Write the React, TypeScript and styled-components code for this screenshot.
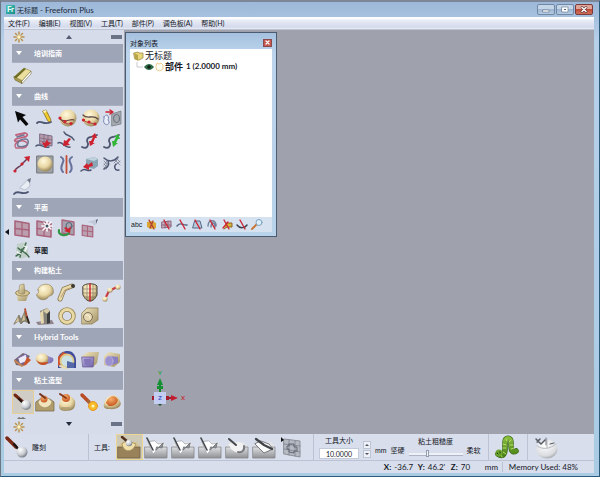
import React, { useState } from "react";
import styled, { createGlobalStyle } from "styled-components";

const GlobalStyle = createGlobalStyle`
  *, *::before, *::after { box-sizing: border-box; }
  body {
    margin: 0;
    font-family: Lato, "Noto Sans CJK SC", sans-serif;
    font-size: 7px;
    line-height: 10px;
    color: #15181f;
  }
  button { font: inherit; color: inherit; padding: 0; border: 0; background: none; }
  svg { display: block; flex: none; }
`;

const Window = styled.div`
  min-height: 100vh;
  display: flex;
  flex-direction: column;
  padding: 0 5px 3px 3px;
  background: linear-gradient(#9db8d8, #b6d0ea 40px, #a9cbe4);
  border: 1px solid #2d5a78;
  border-top: 2px solid #7d8797;
  border-left-color: #6b7780;
`;

const TitleBar = styled.header`
  height: 15px;
  display: flex;
  align-items: center;
  gap: 2px;
  padding: 0 1px 0 2px;
`;

const Logo = styled.span`
  width: 9px;
  height: 9px;
  background: linear-gradient(135deg, #4cc4b6, #158f88);
  color: #f0fffc;
  font-size: 8px;
  font-weight: 700;
  line-height: 9px;
  text-align: center;
`;

const Title = styled.h1`
  flex: 1;
  margin: 0;
  font-size: 7px;
  font-weight: 400;
  color: #1d2a3b;
`;

const Latin = styled.span`
  font-size: 8px;
`;

const Caption = styled.div`
  display: flex;
  gap: 1px;
`;

const CaptionButton = styled.button<{ $danger?: boolean }>`
  width: 18px;
  height: 11px;
  display: grid;
  place-items: center;
  border: 1px solid ${(p) => (p.$danger ? "#7c3a3a" : "#7289a6")};
  border-radius: 2px;
  background: ${(p) =>
    p.$danger
      ? "linear-gradient(#dfa596 45%, #c04a38 50%, #d0705a)"
      : "linear-gradient(#c5d6e9 45%, #9db5d0 50%, #b4cbe3)"};
`;

const MenuBar = styled.nav`
  height: 13px;
  display: flex;
  align-items: center;
  gap: 9px;
  padding: 0 4px;
  background: linear-gradient(#fdfdff 0 2px, #e9edf7 3px, #d3daeb 10px, #e9ecf5);
  border-bottom: 1px solid #bcc4d4;
`;

const MenuItem = styled.button`
  line-height: 10px;
  white-space: nowrap;
`;

const Workspace = styled.div`
  flex: 1;
  display: flex;
`;

const Sidebar = styled.aside`
  width: 120px;
  flex: none;
  display: flex;
  flex-direction: column;
  padding: 0 1px 0 8px;
  background: #d6dcea;
  position: relative;
`;

const Collapse = styled.button`
  position: absolute;
  left: 1px;
  top: 50%;
  display: grid;
  transform: translateY(-50%);
`;

const Strip = styled.div`
  height: 14px;
  display: flex;
  align-items: center;
  justify-content: space-between;
  padding-right: 1px;
`;

const BottomStrip = styled(Strip)`
  height: 20px;
`;

const Grip = styled.span`
  width: 11px;
  height: 4px;
  background: #6b7387;
`;

const SectionHead = styled.button`
  width: 100%;
  height: 19px;
  display: flex;
  align-items: center;
  gap: 12px;
  padding-left: 4px;
  background: #9ea5b7;
  border-bottom: 1px solid #aab0c1;
  color: #fff;
  font-weight: 700;
  text-align: left;
`;

const ToolGrid = styled.div<{ $row: number }>`
  display: grid;
  grid-template-columns: repeat(5, 1fr);
  grid-auto-rows: ${(p) => p.$row}px;
`;

const Tool = styled.button<{ $active?: boolean }>`
  display: flex;
  align-items: center;
  background: ${(p) => (p.$active ? "#cfcdc6" : "none")};
  box-shadow: ${(p) => (p.$active ? "inset 0 0 0 1px #e6cf94" : "none")};
`;

const SketchTool = styled(Tool)`
  grid-column: 1 / span 3;
  font-weight: 700;
`;

const Viewport = styled.main`
  flex: 1;
  display: flex;
  align-items: flex-end;
  padding: 0 0 23px 22px;
  background: #9fa2ad;
  position: relative;
`;

const AxisLabel = styled.text`
  font: 700 6px Lato, sans-serif;
  text-anchor: middle;
`;

const Panel = styled.section`
  position: absolute;
  left: 1px;
  top: 2px;
  width: 152px;
  height: 205px;
  display: flex;
  flex-direction: column;
  padding: 3px 4px 4px;
  background: linear-gradient(#a5c1df, #bcd4ec 20px, #b9d3ea);
  border: 1px solid #4c5c70;
`;

const PanelHead = styled.header`
  height: 13px;
  display: flex;
  align-items: center;
  justify-content: space-between;
`;

const PanelClose = styled.button`
  width: 9px;
  height: 8px;
  display: grid;
  place-items: center;
  background: #c5574c;
  border: 1px solid #8c4a4c;
`;

const PanelBody = styled.div`
  flex: 1;
  background: #fff;
  padding: 1px 2px;
`;

const TreeRow = styled.div<{ $child?: boolean }>`
  height: 11px;
  display: flex;
  align-items: center;
  gap: 1px;
  font-size: 9px;
  line-height: 11px;
  font-weight: ${(p) => (p.$child ? 700 : 400)};
  padding-left: ${(p) => (p.$child ? 4 : 1)}px;
  white-space: nowrap;
`;

const PanelTools = styled.div`
  height: 15px;
  display: flex;
  align-items: center;
  justify-content: space-between;
  padding: 0 9px 0 1px;
  background: #d6e2f0;
`;

const TextTool = styled.button`
  font: 7px/10px "Liberation Sans", sans-serif;
`;

const Dock = styled.footer`
  background: #d8deec;
`;

const ToolBar = styled.div`
  height: 27px;
  display: flex;
  align-items: stretch;
  border-bottom: 1px solid #bac2d3;
`;

const Group = styled.div<{ $width?: number }>`
  display: flex;
  align-items: center;
  gap: 4px;
  padding: 0 5px;
  ${(p) => p.$width && `width: ${p.$width}px;`}
  border-right: 1px solid #bac2d3;
  white-space: nowrap;
  &:last-child { border-right: 0; }
`;

const CurrentTool = styled(Group)`
  padding: 0 1px;
`;

const ShapeButton = styled.button<{ $active?: boolean }>`
  width: 27px;
  height: 26px;
  display: grid;
  place-items: center;
  background: ${(p) => (p.$active ? "#cfc9b8" : "none")};
  border: ${(p) => (p.$active ? "1px solid #ebd692" : "0")};
`;

const Shapes = styled.div`
  display: flex;
  margin-left: 2px;
`;

const Field = styled.label`
  display: flex;
  flex-direction: column;
  align-items: center;
  gap: 3px;
`;

const SizeInput = styled.input`
  width: 40px;
  height: 11px;
  padding: 0 1px;
  border: 1px solid #c3cad9;
  background: #fff;
  font: 7px/9px Lato, sans-serif;
  text-align: center;
  color: #15181f;
`;

const Spinner = styled.div`
  display: flex;
  flex-direction: column;
  align-self: flex-end;
  gap: 1px;
  margin-bottom: 2px;
`;

const SpinButton = styled.button`
  width: 8px;
  height: 8px;
  display: grid;
  place-items: center;
  background: #eef1f7;
  border: 1px solid #bdc4d2;
`;

const Low = styled.span`
  align-self: flex-end;
  margin-bottom: 5px;
`;

const Slider = styled.input`
  appearance: none;
  width: 54px;
  height: 10px;
  margin: 0;
  background: linear-gradient(transparent 4px, #eef1f7 4px 6px, #aeb5c5 6px 7px, transparent 7px);
  &::-webkit-slider-thumb {
    appearance: none;
    width: 3px;
    height: 7px;
    background: #f4f6fa;
    border: 1px solid #949db0;
  }
`;

const StatusBar = styled.div`
  height: 12px;
  display: flex;
  align-items: center;
  justify-content: flex-end;
  padding-right: 16px;
  font-size: 8px;
  white-space: nowrap;
`;

const Coord = styled.span<{ $width: number }>`
  width: ${(p) => p.$width}px;
  display: flex;
  gap: 3px;
`;

const Memory = styled.span`
  border-left: 1px solid #bac2d3;
  padding-left: 6px;
`;

const HiddenSvg = styled.svg`
  position: absolute;
  width: 0;
  height: 0;
`;

const red = "#cf2230";
const ink = "#4d5670";

const Gradients = () => (
  <HiddenSvg aria-hidden="true">
    <defs>
      <radialGradient id="cream" cx=".4" cy=".3" r=".75">
        <stop offset="0" stopColor="#fff9dd" />
        <stop offset=".55" stopColor="#e9d7a4" />
        <stop offset="1" stopColor="#8d7a50" />
      </radialGradient>
      <radialGradient id="silver" cx=".35" cy=".3" r=".75">
        <stop offset="0" stopColor="#fff" />
        <stop offset=".6" stopColor="#c9ccd1" />
        <stop offset="1" stopColor="#6f747d" />
      </radialGradient>
      <radialGradient id="pearl" cx=".4" cy=".3" r=".8">
        <stop offset="0" stopColor="#fff" />
        <stop offset=".7" stopColor="#dadcdf" />
        <stop offset="1" stopColor="#8d9198" />
      </radialGradient>
      <radialGradient id="orange" cx=".4" cy=".3" r=".75">
        <stop offset="0" stopColor="#f7b06c" />
        <stop offset="1" stopColor="#c3501c" />
      </radialGradient>
      <linearGradient id="violet" x2="1" y2="1">
        <stop offset="0" stopColor="#b7acdf" />
        <stop offset="1" stopColor="#6e62a8" />
      </linearGradient>
      <linearGradient id="clay" x2="1" y2="1">
        <stop offset="0" stopColor="#f4e8bf" />
        <stop offset="1" stopColor="#a08f64" />
      </linearGradient>
      <linearGradient id="stone" x2="0" y2="1">
        <stop offset="0" stopColor="#dfe0e2" />
        <stop offset="1" stopColor="#8f9194" />
      </linearGradient>
      <linearGradient id="leaf" x2="0" y2="1">
        <stop offset="0" stopColor="#86bb3c" />
        <stop offset="1" stopColor="#4b8419" />
      </linearGradient>
    </defs>
  </HiddenSvg>
);

const Icon = ({ children, w = 22, h = 22 }: { children: React.ReactNode; w?: number; h?: number }) => (
  <svg width={w} height={h} viewBox={`0 0 ${w} ${h}`} fill="none" strokeLinecap="round" strokeLinejoin="round" aria-hidden="true">
    {children}
  </svg>
);

const Curve = ({ d, c = ink, w = 1.5 }: { d: string; c?: string; w?: number }) => (
  <path d={d} stroke={c} strokeWidth={w} />
);

const Dots = ({ at, r = 1.6 }: { at: number[][]; r?: number }) => (
  <>
    {at.map(([x, y]) => (
      <circle key={`${x}-${y}`} cx={x} cy={y} r={r} fill={red} />
    ))}
  </>
);

const PinkPlane = ({ s = 1 }: { s?: number }) => (
  <g transform={`scale(${s})`} stroke="#a9647c">
    <path d="M3 4L17 6.5V20L3 18Z" fill="#bb9fae" strokeWidth="1.6" />
    <path d="M10 5.5V19M3 11.5L17 13" strokeWidth="1.3" />
  </g>
);

const SunShape = () => (
  <g stroke="#b99148" strokeWidth="1.5">
    <path d="M7 1V2.5M7 9.5V11M2 6H3.5M10.5 6H12M3.5 2.5L4.5 3.5M9.5 8.5L10.5 9.5M3.5 9.5L4.5 8.5M9.5 3.5L10.5 2.5" />
    <circle cx="7" cy="6" r="2.3" fill="#fff3c8" strokeWidth=".8" />
  </g>
);

const icons: Record<string, React.ReactNode> = {
  book: (
    <>
      <path d="M2 13L12 4L19 7L10 17Z" fill="#eadf9c" stroke="#948a4a" strokeWidth=".6" />
      <path d="M2 13L12 4L14 5L4 14.5Z" fill="#6d6c22" />
      <path d="M2 13L3 16L10 19.5V17Z" fill="#a89b4e" stroke="#6c642b" strokeWidth=".6" />
      <path d="M10 17L19 7V10L10 19.5Z" fill="#fff" stroke="#7a713c" strokeWidth=".6" />
    </>
  ),
  arrow: <path d="M3 4L14 8L10.5 10L16.5 17L14 19L8 12.5L6 15.5Z" fill="#080808" />,
  pencil: (
    <>
      <Curve d="M3 16C7 12 9 19 17 15" w={1.8} />
      <path d="M9 4L12 3L17 13L16 15L14 14Z" fill="#f1c927" stroke="#85691a" strokeWidth=".8" />
      <path d="M9 4L10 6L12.5 5L12 3Z" fill="#fff3bf" />
    </>
  ),
  ballLeft: (
    <>
      <circle cx="12" cy="11" r="8.5" fill="url(#cream)" />
      <Curve d="M4 12C9 17 14 11 18 13" c="#6b4440" w={1.2} />
      <Curve d="M6 14C9 18 13 17 16 16" c="#a84a48" w={1} />
      <Dots at={[[4, 11], [9, 14.5], [15, 16.5]]} />
    </>
  ),
  ballRight: (
    <>
      <circle cx="12" cy="11" r="8.5" fill="url(#cream)" />
      <Curve d="M4 8C8 13 14 7 19 12" c="#5b4846" w={1.3} />
      <Curve d="M4 13C8 16 12 16 16 17" c="#a84a48" w={1} />
      <Dots at={[[4.5, 13], [10, 15], [16, 17]]} />
    </>
  ),
  project: (
    <>
      <path d="M11 7L20 4V17L11 19Z" fill="#a4a8af" stroke="#787d87" strokeWidth=".8" />
      <ellipse cx="15.5" cy="11.5" rx="3" ry="4" stroke="#666d7b" />
      <path d="M3 10C5 6 9 9 7 13C10 16 6 19 4 17C1 14 4 12 3 10Z" fill="#e7ecf8" stroke="#7c89b2" />
      <path d="M5 5H11M9 3L12 5L9 7" stroke={red} strokeWidth="1.5" />
    </>
  ),
  ribbon: (
    <>
      <path d="M4 5L13 3C17 4 15 7 12 7L4 9C1 11 4 12 6 11" stroke="#c2637e" strokeWidth="1.8" />
      <path d="M4 18C1 14 6 10 12 11C18 13 15 18 10 18Z" stroke="#c2637e" strokeWidth="1.4" />
      <path d="M5 7L12 5M6 16C4 13 8 9 12 9C18 8 17 15 13 16C10 17 8 17 6 16Z" stroke="#6f7590" strokeWidth="1.5" />
    </>
  ),
  gridArrow: (
    <>
      <path d="M6 4L18 6V16L6 14Z" fill="#b99cac" stroke="#7e6f88" />
      <path d="M10 4.5V15M14 5.5V16M6 8L18 10M6 11L18 13" stroke="#71667f" strokeWidth=".7" />
      <Curve d="M2 16C6 12 9 19 15 17" />
      <path d="M13 9L14 12L17 13L11 18L8 12L11 13Z" fill={red} />
    </>
  ),
  curveArrow: (
    <>
      <Curve d="M8 2C10 7 15 4 18 10" />
      <Curve d="M2 13C6 10 9 19 14 17" />
      <path d="M15 9L12 13L14 15L7 16L8 10L10 11L13 8Z" fill={red} />
    </>
  ),
  redSwap: (
    <>
      <Curve d="M3 17C9 20 10 14 8 11C8 6 12 8 18 5" w={1.8} />
      <path d="M16 3L18 8L16 8L14 13H16L11 16L10 11H12L14 7L12 7Z" fill={red} />
    </>
  ),
  greenSwap: (
    <>
      <Curve d="M3 17C9 20 10 14 8 11C8 6 12 8 18 5" w={1.8} />
      <path d="M17 4L19 9H17L15 13H17L12 17L11 11H13L15 7L13 7Z" fill="#32b637" />
    </>
  ),
  extend: (
    <>
      <Curve d="M3 18C4 13 8 15 10 11L15 6" c="#693c58" />
      <path d="M12 4L18 3L17 9Z" fill={red} />
      <Dots at={[[3, 18], [10, 11]]} />
    </>
  ),
  framedBall: (
    <>
      <rect x="3" y="3" width="16" height="17" fill="#9ea1a3" stroke="#77797b" />
      <circle cx="11" cy="11" r="7.5" fill="url(#cream)" />
    </>
  ),
  mirror: (
    <>
      <Curve d="M5 4C12 8 1 13 7 19" c="#66739a" w={2} />
      <Curve d="M16 4C9 8 20 13 14 19" c="#66739a" w={2} />
      <path d="M10.5 3V20" stroke="#c54e35" strokeWidth="1.8" />
    </>
  ),
  boxArrow: (
    <>
      <path d="M7 6L15 4L19 6V13L15 16L7 14Z" fill="#89a6b4" />
      <path d="M7 6L15 4L19 6L15 8Z" fill="#bed1dc" />
      <Curve d="M2 18C6 14 8 19 12 17" />
      <path d="M13 9L14 13L10 14L10 17L4 14L8 10L9 12Z" fill={red} />
    </>
  ),
  hatch: (
    <>
      <Curve d="M3 5C7 9 13 9 17 4M7 8C9 12 6 15 3 16M18 17C13 18 13 13 15 11" />
      <path d="M3 8L6 11M3 11L6 14M3 14L5 16M6 8L3 12M7 10L3 16M14 7L19 12M17 7L19 9M19 8L15 12M17 6L13 10" stroke="#6a7285" strokeWidth=".7" />
    </>
  ),
  coneCurve: (
    <>
      <Curve d="M2 18C6 13 10 20 16 16" w={1.8} />
      <path d="M17 3L18 10L13 14L8 12Z" fill="#e9edf4" stroke="#a9b1c1" strokeWidth=".7" />
      <path d="M15 4L19 2L18 7Z" fill="#6d7483" />
    </>
  ),
  plane: <PinkPlane />,
  planeStar: (
    <>
      <PinkPlane />
      <path d="M13 4V14M8 9H18M10 6L17 12M17 5L9 13" stroke="#fff" strokeWidth="1.6" />
      <circle cx="13" cy="9" r="1.5" fill="#465161" />
    </>
  ),
  planeArrow: (
    <>
      <path d="M6 3L18 5V18L6 16Z" fill="#a6a3ae" stroke="#a9647c" strokeWidth="1.3" />
      <ellipse cx="13" cy="9" rx="3" ry="3.5" stroke="#4e6a7d" />
      <path d="M3 13C2 18 9 20 13 16" stroke="#369447" strokeWidth="2.2" />
      <path d="M15 9L14 16L8 14L10 13L8 11L10 10L12 12Z" fill={red} />
    </>
  ),
  planeCone: (
    <>
      <g transform="translate(1 5)"><PinkPlane s={0.75} /></g>
      <path d="M8 5L19 2L16 9L13 6Z" fill="#c1c9d8" />
      <path d="M17 3L19 2L17 7Z" fill="#58657d" />
    </>
  ),
  sketch: (
    <>
      <path d="M5 5L14 3L17 17L8 20L4 14Z" fill="#c1d0c9" />
      <path d="M4 17C8 15 12 10 14 4M6 9C10 13 13 12 17 18M8 18L10 10" stroke="#416d4e" strokeWidth="1.4" />
      <path d="M12 7L15 8L13 12M5 13L9 15" stroke="#fff" strokeWidth="1.3" />
    </>
  ),
  pot: (
    <>
      <path d="M4 12L6 20H14L17 12Z" fill="url(#clay)" />
      <ellipse cx="10.5" cy="12" rx="7" ry="3" fill="#d8c795" stroke="#8b7b50" strokeWidth=".8" />
      <path d="M8 4L12 3L13 12C11 14 8 13 7 12Z" fill="url(#clay)" stroke="#85764e" strokeWidth=".5" />
    </>
  ),
  bean: <path d="M4 9C4 3 15 1 18 6C21 11 19 15 15 15C13 20 5 20 3 15C1 12 7 13 4 9Z" fill="url(#cream)" stroke="#8d7d53" strokeWidth=".6" />,
  tube: (
    <>
      <path d="M4 18L8 8L16 5" stroke="#8b7b52" strokeWidth="5" />
      <path d="M4 18L8 8L16 5" stroke="#e9daa9" strokeWidth="3.4" />
      <path d="M5 16L9 9L14 7" stroke="#b08a66" strokeWidth=".8" />
      <circle cx="17" cy="5" r="2" fill="#3d3a34" />
    </>
  ),
  face: (
    <>
      <path d="M4 5C6 2 16 2 18 5V14C16 18 14 20 11 20C8 20 6 18 4 14Z" fill="url(#cream)" stroke="#4c4538" strokeWidth="1" />
      <path d="M8 3V18M14 3V18M4 8H18M4 12H18M6 16H16" stroke="#7a705a" strokeWidth=".6" />
      <path d="M11 3V20" stroke={red} strokeWidth="1.5" />
    </>
  ),
  bones: (
    <>
      <path d="M4 18L8 10L16 6" stroke="#cc3c43" strokeWidth="2.2" />
      {[[4, 18], [9, 9], [17, 6]].map(([x, y]) => (
        <circle key={y} cx={x} cy={y} r="2.6" fill="url(#cream)" />
      ))}
    </>
  ),
  spikes: (
    <>
      <path d="M2 19L7 10L9 15L13 6L17 18L12 16L9 19L7 16Z" fill="#8c8571" stroke="#77725f" strokeWidth=".8" />
      <path d="M3 18L6 12L7 16M10 16L12 9L13 15" fill="#d7c699" />
      <path d="M13 4L15 12" stroke="#b54f32" strokeWidth="1.8" />
      <path d="M15 12L17 18" stroke="#33251e" strokeWidth="1.8" />
    </>
  ),
  tower: (
    <>
      <path d="M2 17L18 15L20 19L4 20Z" fill="#91858d" />
      <path d="M6 6L13 3L16 6V18L8 19Z" fill="#85827a" />
      <path d="M6 8L9 5L10 18L7 19Z" fill="#e4d7ac" />
      <path d="M9 6L13 3L16 6L13 9Z" fill="#d6cba6" />
      <path d="M13 9L16 6V18L13 19Z" fill="#3b3e3e" />
    </>
  ),
  ring: (
    <>
      <circle cx="11" cy="11" r="6.5" stroke="#978551" strokeWidth="4.5" />
      <circle cx="11" cy="11" r="6.5" stroke="#e8d9a6" strokeWidth="2.8" />
    </>
  ),
  rollBox: (
    <>
      <path d="M3 8L8 3H19V15L13 19H3Z" fill="url(#clay)" stroke="#94845c" strokeWidth=".8" />
      <circle cx="9" cy="12" r="4.5" fill="#e5d8b3" stroke="#7c705a" />
      <path d="M7 10A3 3 0 0 1 11 13" stroke="#fff8db" />
    </>
  ),
  hybridSheet: (
    <>
      <path d="M2 12L11 5L18 8L11 18L4 17Z" fill="#78666d" />
      <path d="M6 10L14 6L16 13L8 16Z" fill="#ece9f7" stroke="#7565a6" />
      <path d="M15 9L19 12L14 17L11 18Z" fill="#cb562b" />
      <path d="M3 13L10 18" stroke="#c88758" strokeWidth="2" />
    </>
  ),
  hybridCone: (
    <>
      <path d="M9 6L19 10C20 12 19 14 17 15L9 17Z" fill="url(#violet)" />
      <path d="M2 9C4 4 12 4 14 9C15 13 13 17 9 17C5 17 1 14 2 9Z" fill="url(#cream)" />
      <path d="M2 11C5 16 9 14 14 14C13 18 5 19 2 11Z" fill="#c94f28" />
    </>
  ),
  hybridBall: (
    <>
      <path d="M2 20V12C2 5 7 3 12 3C17 3 20 8 20 12V20Z" fill="#414c9b" />
      <path d="M2 9L7 4L11 6L5 16L2 18Z" fill="#d0542d" />
      <circle cx="11" cy="13" r="6.5" fill="#cce1e3" stroke="#dec988" strokeWidth="1.8" />
      <path d="M11 13L18 15V20H11Z" fill="#5568a8" />
      <path d="M4 18L9 20" stroke="#e9ddb2" strokeWidth="2" />
    </>
  ),
  hybridCube: (
    <>
      <path d="M3 8L9 4H20L18 15L14 19H4Z" fill="url(#clay)" />
      <path d="M3 9H15L14 19H4Z" fill="url(#violet)" stroke="#655592" strokeWidth=".7" />
      <path d="M5 11H12V17H6Z" fill="#8377b7" />
    </>
  ),
  hybridPipe: (
    <>
      <path d="M3 8L8 4L19 6V14L13 19L3 17Z" fill="url(#clay)" />
      <path d="M8 8L17 9V15L8 18Z" fill="#8a7fc0" />
      <ellipse cx="8" cy="13" rx="4" ry="5" fill="#9b91ce" stroke="#bdb4e0" strokeWidth=".8" />
    </>
  ),
  scoop: (
    <>
      <path d="M3 4L11 11" stroke="#702512" strokeWidth="3" />
      <path d="M7 8L11 12" stroke="#201816" strokeWidth="2" />
      <circle cx="14" cy="14" r="5" fill="url(#silver)" />
    </>
  ),
  carve: (
    <>
      <path d="M2 11L6 8H16L20 11V20H2Z" fill="#b09b6a" stroke="#796f51" strokeWidth=".8" />
      <path d="M4 11C6 18 15 19 18 11C15 5 7 5 4 11Z" fill="#f1e4bd" stroke="#9d8d61" strokeWidth=".6" />
      <circle cx="10" cy="8" r="3.5" fill="url(#orange)" />
      <path d="M6 3L11 7" stroke="#733420" strokeWidth="2" />
    </>
  ),
  smudge: (
    <>
      <path d="M4 11C8 2 16 4 19 10C20 17 17 20 9 20C3 20 2 16 4 11Z" fill="url(#cream)" />
      <circle cx="10" cy="7" r="4" fill="url(#orange)" />
      <path d="M4 3L10 7" stroke="#8a3818" strokeWidth="2" />
      <path d="M6 17H13" stroke="#9d8a62" />
    </>
  ),
  roller: (
    <>
      <path d="M3 4L10 11" stroke="#b94b25" strokeWidth="3.5" />
      <path d="M9 10L13 14" stroke="#9b6c3e" strokeWidth="2" />
      <circle cx="14" cy="15" r="4.5" fill="#f7bb29" stroke="#e6962a" />
      <circle cx="14" cy="15" r="1.5" fill="#fff5be" />
    </>
  ),
  peel: (
    <>
      <path d="M3 13C5 3 16 1 19 10C22 15 16 19 8 18C4 18 2 16 3 13Z" fill="url(#cream)" />
      <path d="M5 12C7 4 15 3 17 9C16 13 14 15 8 15Z" fill="url(#orange)" />
    </>
  ),
};

type Section = { name: string; row: number; tools: string[]; latin?: boolean; sketch?: boolean };

const sections: Section[] = [
  { name: "培训指南", row: 24, tools: ["book"] },
  {
    name: "曲线",
    row: 23,
    tools: [
      "arrow", "pencil", "ballLeft", "ballRight", "project",
      "ribbon", "gridArrow", "curveArrow", "redSwap", "greenSwap",
      "extend", "framedBall", "mirror", "boxArrow", "hatch",
      "coneCurve",
    ],
  },
  { name: "平面", row: 22, sketch: true, tools: ["plane", "planeStar", "planeArrow", "planeCone"] },
  {
    name: "构建粘土",
    row: 24,
    tools: ["pot", "bean", "tube", "face", "bones", "spikes", "tower", "ring", "rollBox"],
  },
  { name: "Hybrid Tools", row: 24, latin: true, tools: ["hybridSheet", "hybridCone", "hybridBall", "hybridCube", "hybridPipe"] },
  { name: "粘土造型", row: 24, tools: ["scoop", "carve", "smudge", "roller", "peel"] },
];

const ToolSection = ({ section }: { section: Section }) => (
  <section>
    <SectionHead>
      <Icon w={6} h={4}><path d="M0 0H6L3 4Z" fill="#fff" /></Icon>
      {section.latin ? <Latin>{section.name}</Latin> : section.name}
    </SectionHead>
    <ToolGrid $row={section.row}>
      {section.tools.map((t) => (
        <Tool key={t} aria-label={t} $active={t === "scoop"}>
          <Icon>{icons[t]}</Icon>
        </Tool>
      ))}
      {section.sketch && (
        <SketchTool>
          <Icon>{icons.sketch}</Icon>
          草图
        </SketchTool>
      )}
    </ToolGrid>
  </section>
);

const Block = ({ kind }: { kind: number }) => (
  <Icon w={24} h={23}>
    <path d="M1 11L5 6H19L23 11V22H1Z" fill={kind === 0 ? "#d9c48d" : "#e3e4e6"} />
    <path d="M1 11H23V22H1Z" fill={kind === 0 ? "#99825a" : "url(#stone)"} stroke={kind === 0 ? "#6f6041" : "#85878b"} strokeWidth=".8" />
    {kind === 0 && (
      <>
        <path d="M5 8C6 16 15 18 19 8L14 6H8Z" fill="#f0dfa9" stroke="#a08b5c" strokeWidth=".8" />
        <path d="M5 1L11 6" stroke="#53301e" strokeWidth="2.5" />
        <circle cx="12" cy="7" r="3.2" fill="url(#silver)" />
      </>
    )}
    {kind > 0 && kind < 4 && (
      <>
        <path d="M4 6L9 18L20 7L14 8L11 5Z" fill="#fff" stroke="#a9abae" strokeWidth=".8" />
        <path d="M12 14L19 7L18 12L13 11Z" fill="#8d9094" stroke="#797c80" strokeWidth="1" />
        <path d="M3 2L9 14" stroke="#44474b" strokeWidth="1.6" />
      </>
    )}
    {kind === 4 && (
      <>
        <path d="M4 8C6 18 19 20 20 10L14 6Z" fill="#f2f2f3" />
        <path d="M4 3L11 9" stroke="#44474b" strokeWidth="2" />
        <path d="M19 10C20 14 17 17 13 16" stroke="#76797d" strokeWidth="2" />
      </>
    )}
    {kind === 5 && (
      <>
        <path d="M3 8L12 17L21 13L17 8L9 5Z" fill="#fafafa" stroke="#77797d" />
        <path d="M4 3L12 9L20 13" stroke="#3f4246" strokeWidth="2.2" />
      </>
    )}
  </Icon>
);

const slash = <path d="M4 2L9 11" stroke={red} strokeWidth="1.3" />;

const panelIcons: React.ReactNode[] = [
  <><path d="M2 4L7 3L11 5V10L6 11L2 9Z" fill="#dca430" /><path d="M4 2L9 11M8 3L5 10" stroke="#b03f35" strokeWidth="1.3" /></>,
  <><path d="M2 4L11 3V9L2 10ZM5 4V10M8 3V9M2 7H11" fill="#c9adbd" stroke="#8d677e" />{slash}</>,
  <><Curve d="M1 8C5 3 7 8 11 7" c="#596782" />{slash}</>,
  <><path d="M4 3L9 3L11 10H2Z" fill="#b9c9dc" stroke="#526987" />{slash}</>,
  <><Curve d="M2 8C2 0 11 2 10 8M5 9C5 3 9 4 9 9" c="#75819c" />{slash}</>,
  <><path d="M5 5H11V9H6L3 11" fill="#d8b43a" stroke="#8d6429" /><path d="M3 2L8 11M7 4L2 10" stroke={red} strokeWidth="1.3" /></>,
  <><Curve d="M1 7C4 11 9 10 11 7" c="#3c4150" />{slash}</>,
  <><path d="M6 6L1 11" stroke="#c87a3d" strokeWidth="2" /><circle cx="8" cy="4.5" r="3" fill="#dceffa" stroke="#7ba2bd" /></>,
];

export default function App() {
  const [size, setSize] = useState("10.0000");
  const [rough, setRough] = useState(34);
  return (
    <>
      <GlobalStyle />
      <Gradients />
      <Window>
        <TitleBar>
          <Logo>Fr</Logo>
          <Title>无标题<Latin> - Freeform Plus</Latin></Title>
          <Caption>
            <CaptionButton aria-label="最小化"><Icon w={8} h={6}><rect x="1" y="3" width="6" height="2" fill="#fff" stroke="#64738a" strokeWidth=".6" /></Icon></CaptionButton>
            <CaptionButton aria-label="还原"><Icon w={8} h={7}><rect x="1" y="1" width="6" height="5" fill="#fff" stroke="#64738a" strokeWidth=".6" /><rect x="3" y="3" width="2" height="1" fill="#52617a" /></Icon></CaptionButton>
            <CaptionButton $danger aria-label="关闭"><Icon w={8} h={7}><path d="M2 1.5L6 5.5M6 1.5L2 5.5" stroke="#5c3038" strokeWidth="2.5" /><path d="M2 1.5L6 5.5M6 1.5L2 5.5" stroke="#fff" strokeWidth="1.5" /></Icon></CaptionButton>
          </Caption>
        </TitleBar>
        <MenuBar>
          {["文件(F)", "编辑(E)", "视图(V)", "工具(T)", "部件(P)", "调色板(A)", "帮助(H)"].map((m) => (
            <MenuItem key={m}>{m}</MenuItem>
          ))}
        </MenuBar>
        <Workspace>
          <Sidebar>
            <Collapse aria-label="折叠"><Icon w={4} h={6}><path d="M4 0V6L0 3Z" fill="#10131a" /></Icon></Collapse>
            <Strip>
              <Icon w={14} h={12}><SunShape /></Icon>
              <Icon w={6} h={4}><path d="M0 4H6L3 0Z" fill="#535c70" /></Icon>
              <Grip />
            </Strip>
            {sections.map((s) => <ToolSection key={s.name} section={s} />)}
            <BottomStrip>
              <Icon w={14} h={20}>
                <path d="M5 5H14L11 3L9 4L7 3Z" fill="#77736d" />
                <g transform="translate(0 7)"><SunShape /></g>
              </Icon>
              <Icon w={6} h={4}><path d="M0 0H6L3 4Z" fill="#222b3c" /></Icon>
              <Grip />
            </BottomStrip>
          </Sidebar>
          <Viewport>
            <Icon w={46} h={44}>
              <AxisLabel x="14" y="8" fill="#2aa23e">Y</AxisLabel>
              <path d="M14 18V30" stroke="#17842a" strokeWidth="2" />
              <path d="M14 11L17 18H11ZM11 19H17V22H11Z" fill="#159132" />
              <path d="M20 31H28" stroke="#9e1c2d" strokeWidth="2" />
              <path d="M32 31L25 28V34Z" fill="#c31e30" />
              <path d="M20 29H23V33H20ZM6 29H8V33H6Z" fill="#a31f30" />
              <AxisLabel x="37" y="33" fill="#c5303c">X</AxisLabel>
              <path d="M11 36H17L14 39Z" fill="#1f4a2b" />
              <rect x="8" y="25" width="12" height="12" fill="#c4cdf2" />
              <AxisLabel x="14" y="33" fill="#4257c5">Z</AxisLabel>
            </Icon>
            <Panel>
              <PanelHead>
                <span>对象列表</span>
                <PanelClose aria-label="关闭列表"><Icon w={5} h={5}><path d="M1 1L4 4M4 1L1 4" stroke="#fff" strokeWidth="1.2" /></Icon></PanelClose>
              </PanelHead>
              <PanelBody>
                <TreeRow>
                  <Icon w={11} h={10}>
                    <path d="M1 2L5 1L6 2H10V7L6 9L2 8Z" fill="#e9d67a" stroke="#8f7f35" strokeWidth=".7" />
                    <path d="M1 2L5 4V10L2 8Z" fill="#b8a548" />
                  </Icon>
                  无标题
                </TreeRow>
                <TreeRow $child>
                  <Icon w={7} h={10}><path d="M1 0V5H7" stroke="#b8bcc4" strokeWidth=".8" /></Icon>
                  <Icon w={10} h={8}>
                    <path d="M0 4C3 0 7 0 10 4C7 8 3 8 0 4Z" fill="#2f6b45" />
                    <circle cx="5" cy="4" r="1.8" fill="#0f2216" />
                  </Icon>
                  <Icon w={9} h={10}><path d="M1 4L2 1L4 2L6 1L8 3V7L5 9L2 8Z" fill="#fffdf2" stroke="#e9c888" strokeWidth=".9" /></Icon>
                  部件<Latin>&nbsp;1 (2.0000 mm)</Latin>
                </TreeRow>
              </PanelBody>
              <PanelTools>
                <TextTool>abc</TextTool>
                {panelIcons.map((n, i) => (
                  <button key={i} aria-label={`列表工具 ${i + 1}`}><Icon w={12} h={13}>{n}</Icon></button>
                ))}
              </PanelTools>
            </Panel>
          </Viewport>
        </Workspace>
        <Dock>
          <ToolBar>
            <CurrentTool $width={85}>
              <Icon w={23} h={24}>
                <path d="M2 3L11 12" stroke="#7a2a14" strokeWidth="3.5" />
                <path d="M9 9L14 15" stroke="#1b1514" strokeWidth="2.2" />
                <circle cx="17" cy="17" r="5.5" fill="url(#silver)" />
              </Icon>
              雕刻
            </CurrentTool>
            <Group $width={225}>
              工具:
              <Shapes>
                {[0, 1, 2, 3, 4, 5].map((k) => (
                  <ShapeButton key={k} $active={k === 0} aria-label={`形状 ${k + 1}`}><Block kind={k} /></ShapeButton>
                ))}
                <ShapeButton aria-label="网格">
                  <Icon w={24} h={23}>
                    <path d="M5 3L21 5V21L5 18Z" fill="#b5b9c2" stroke="#8a8f99" />
                    <path d="M10 4V19M16 5V20M5 8L21 10M5 13L21 16" stroke="#7b808b" strokeWidth=".8" />
                    <path d="M10 8H15V11H18V15H15V17L10 16V13H8V10H10Z" stroke="#626772" strokeWidth="1" />
                    <path d="M2 1L5 4L2 6Z" fill="#111" />
                  </Icon>
                </ShapeButton>
              </Shapes>
            </Group>
            <Group $width={175}>
              <Field>
                工具大小
                <SizeInput value={size} onChange={(e) => setSize(e.target.value)} />
              </Field>
              <Spinner>
                <SpinButton aria-label="增大"><Icon w={4} h={2}><path d="M0 2H4L2 0Z" fill="#4a5264" /></Icon></SpinButton>
                <SpinButton aria-label="减小"><Icon w={4} h={2}><path d="M0 0H4L2 2Z" fill="#4a5264" /></Icon></SpinButton>
              </Spinner>
              <Low>mm</Low>
              <Low>坚硬</Low>
              <Field>
                粘土粗糙度
                <Slider type="range" value={rough} onChange={(e) => setRough(+e.target.value)} />
              </Field>
              <Low>柔软</Low>
            </Group>
            <Group $width={39}>
              <Icon w={26} h={25}>
                <path d="M4 19C8 22 11 20 11 14V7C11 2 17 2 17 7V11C17 16 19 18 22 16" stroke="#315b12" strokeWidth="5.5" />
                <path d="M4 19C8 22 11 20 11 14V7C11 2 17 2 17 7V11C17 16 19 18 22 16" stroke="url(#leaf)" strokeWidth="4.4" />
                <path d="M7 19L8 22M9 17L12 19M9 13H12M9 9L12 10M12 4L13 6M17 5L15 7M16 10H19M17 14L20 13" stroke="#c5e278" strokeWidth=".9" />
                <circle cx="5" cy="18" r="3.5" fill="#6ba42d" />
                <path d="M3 18L4 19M6 17V18" stroke="#18310b" />
              </Icon>
            </Group>
            <Group>
              <Icon w={26} h={25}>
                <ellipse cx="14" cy="14" rx="10.5" ry="9.5" fill="url(#pearl)" />
                <path d="M14 4V13M4 11C10 15 17 14 23 9" stroke="#b9bcc2" />
                <path d="M13 3V10" stroke="#777b83" />
                <path d="M3 4L8 9M4 7L7 4M8 9L12 5" stroke="#555a63" strokeWidth="1.5" />
                <path d="M17 9L21 8" stroke="#4d525a" />
              </Icon>
            </Group>
          </ToolBar>
          <StatusBar>
            <Coord $width={34}><b>X:</b>-36.7</Coord>
            <Coord $width={33}><b>Y:</b>46.2'</Coord>
            <Coord $width={34}><b>Z:</b>70</Coord>
            <Coord $width={17}>mm</Coord>
            <Memory>Memory Used: 48%</Memory>
          </StatusBar>
        </Dock>
      </Window>
    </>
  );
}
